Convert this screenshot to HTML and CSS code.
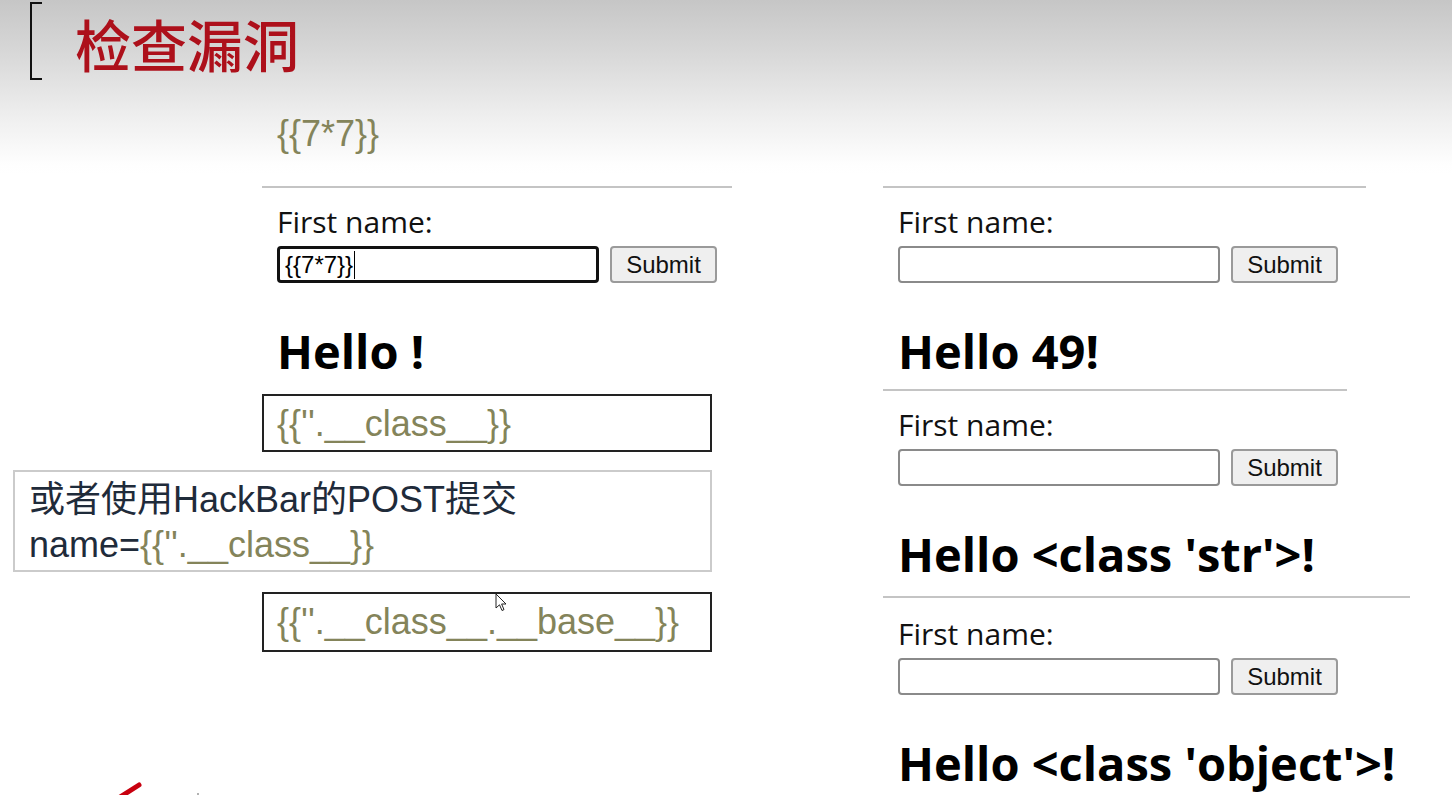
FILE: index.html
```html
<!DOCTYPE html>
<html lang="zh-CN">
<head>
<meta charset="utf-8">
<title>检查漏洞</title>
<link rel="stylesheet" href="styles.css">
</head>
<body>
<div class="slide">
  <header class="slide-head">
    <span class="bracket"></span>
    <h1 class="title">检查漏洞</h1>
  </header>

  <div class="slide-body">
    <div class="col-left">
      <div class="expr">{{7*7}}</div>

      <section class="shot shot-left">
        <div class="rule"></div>
        <div class="fname">First name:</div>
        <div class="row">
          <div class="field field-focus">{{7*7}}<span class="caret"></span></div>
          <button class="btn" type="button">Submit</button>
        </div>
        <h2 class="hello hello-left">Hello !</h2>
      </section>

      <div class="code-box box-a"><span class="olive">{{''.__class__}}</span></div>

      <div class="note-box">
        <div>或者使用HackBar的POST提交</div>
        <div>name=<span class="olive">{{''.__class__}}</span></div>
      </div>

      <div class="code-box box-c"><span class="olive">{{''.__class__.__base__}}</span></div>
    </div>

    <div class="col-right">
      <section class="shot">
        <div class="rule rule-1"></div>
        <div class="fname">First name:</div>
        <div class="row">
          <input class="field" type="text">
          <button class="btn" type="button">Submit</button>
        </div>
        <h2 class="hello">Hello 49!</h2>
      </section>

      <section class="shot">
        <div class="rule rule-2"></div>
        <div class="fname">First name:</div>
        <div class="row">
          <input class="field" type="text">
          <button class="btn" type="button">Submit</button>
        </div>
        <h2 class="hello">Hello &lt;class 'str'&gt;!</h2>
      </section>

      <section class="shot shot-3">
        <div class="rule rule-3"></div>
        <div class="fname fname-3">First name:</div>
        <div class="row">
          <input class="field" type="text">
          <button class="btn" type="button">Submit</button>
        </div>
        <h2 class="hello">Hello &lt;class 'object'&gt;!</h2>
      </section>
    </div>
  </div>

  <svg class="pointer" width="14" height="20" viewBox="0 0 14 20">
    <path d="M1 1 L1 15 L4.5 11.8 L7 17.5 L9 16.6 L6.6 11 L11 11 Z" fill="#fff" stroke="#222" stroke-width="1"/>
  </svg>
  <svg class="pen-mark" width="50" height="24" viewBox="0 0 50 24">
    <line x1="10" y1="22" x2="29" y2="10" stroke="#c8000f" stroke-width="5" stroke-linecap="round"/>
    <circle cx="88" cy="19" r="1" fill="#999"/>
  </svg>
</div>
</body>
</html>
```

FILE: styles.css
```css
html, body {
  margin: 0;
  padding: 0;
}

body {
  width: 1452px;
  height: 795px;
  overflow: hidden;
  background: #fff;
  font-family: "Liberation Sans", Arial, sans-serif;
}

.slide {
  position: relative;
  width: 1452px;
  height: 795px;
  background: linear-gradient(to bottom, #c6c6c6 0px, #dadada 60px, #eeeeee 115px, #fefefe 165px, #ffffff 175px);
}

/* ---------- header ---------- */
.slide-head {
  display: flex;
  align-items: flex-start;
  height: 100px;
  padding-left: 30px;
  box-sizing: border-box;
}

.bracket {
  display: block;
  width: 12px;
  height: 78px;
  margin-top: 2px;
  border: 2px solid #111;
  border-right: none;
  box-sizing: border-box;
}

.title {
  margin: 9px 0 0 33px;
  font-family: "Noto Sans CJK SC", "Noto Sans CJK JP", sans-serif;
  font-size: 56px;
  line-height: 68px;
  font-weight: 500;
  color: #ad101b;
  letter-spacing: 0;
}

/* ---------- body ---------- */
.slide-body {
  display: flex;
  align-items: flex-start;
  padding-left: 13px;
}

.col-left {
  width: 719px;
  display: flex;
  flex-direction: column;
}

.col-right {
  margin-left: 151px;
  padding-top: 86px;
  display: flex;
  flex-direction: column;
}

.olive {
  color: #84845a;
}

.expr {
  height: 86px;
  box-sizing: border-box;
  margin-left: 249px;
  padding: 14px 0 0 15px;
  font-size: 36px;
  line-height: 40px;
  color: #84845a;
}

/* ---------- browser screenshots ---------- */
.shot {
  display: flex;
  flex-direction: column;
}

.shot-left {
  margin-left: 249px;
  width: 470px;
}

.rule {
  height: 2px;
  background: #c4c4c4;
}

.rule-1 { width: 483px; }
.rule-2 { width: 464px; }
.rule-3 { width: 527px; }

.shot-3 { margin-top: 4px; }

.fname {
  margin: 16px 0 0 15px;
  font-family: "Open Sans", "Noto Sans", sans-serif;
  font-size: 30px;
  line-height: 36px;
  color: #111;
}

.fname-3 { margin-top: 18px; }

.row {
  display: flex;
  gap: 10px;
  margin: 6px 0 0 15px;
}

.field {
  width: 322px;
  height: 37px;
  box-sizing: border-box;
  margin: 0;
  padding: 0 4px;
  border: 2px solid #8a8a8a;
  border-radius: 4px;
  background: #fff;
  font-family: "Liberation Sans", Arial, sans-serif;
  font-size: 24px;
  color: #000;
  outline: none;
}

.field-focus {
  display: flex;
  align-items: center;
  padding: 0 0 0 5px;
  border: 3px solid #111;
  line-height: 28px;
}

.caret {
  display: inline-block;
  width: 1px;
  height: 28px;
  margin-left: 1px;
  background: #000;
}

.btn {
  width: 107px;
  height: 37px;
  box-sizing: border-box;
  margin: 0 0 0 1px;
  padding: 0;
  border: 2px solid #9a9a9a;
  border-radius: 4px;
  background: #efefef;
  font-family: "Liberation Sans", Arial, sans-serif;
  font-size: 24px;
  color: #111;
}

.hello {
  margin: 40px 0 10px 15px;
  font-family: "Open Sans", "Noto Sans", sans-serif;
  font-size: 47px;
  line-height: 56px;
  font-weight: 700;
  color: #000;
  white-space: nowrap;
}

.hello-left {
  margin-bottom: 0;
}

/* ---------- slide text boxes ---------- */
.code-box {
  margin-left: 249px;
  width: 450px;
  box-sizing: border-box;
  border: 2px solid #222;
  padding: 8px 0 0 13px;
  font-size: 36px;
  line-height: 40px;
  white-space: nowrap;
}

.box-a {
  margin-top: 15px;
  height: 58px;
}

.box-c {
  margin-top: 20px;
  height: 60px;
}

.note-box {
  margin-top: 18px;
  width: 699px;
  height: 102px;
  box-sizing: border-box;
  border: 2px solid #cbcbcb;
  padding: 5px 0 0 14px;
  font-family: "Liberation Sans", Arial, "Noto Sans CJK SC", sans-serif;
  font-size: 36px;
  line-height: 45px;
  color: #1f2b3a;
  white-space: nowrap;
}

/* ---------- overlays ---------- */
.pointer {
  position: absolute;
  left: 495px;
  top: 593px;
}

.pen-mark {
  position: absolute;
  left: 110px;
  top: 775px;
  overflow: visible;
}
```
